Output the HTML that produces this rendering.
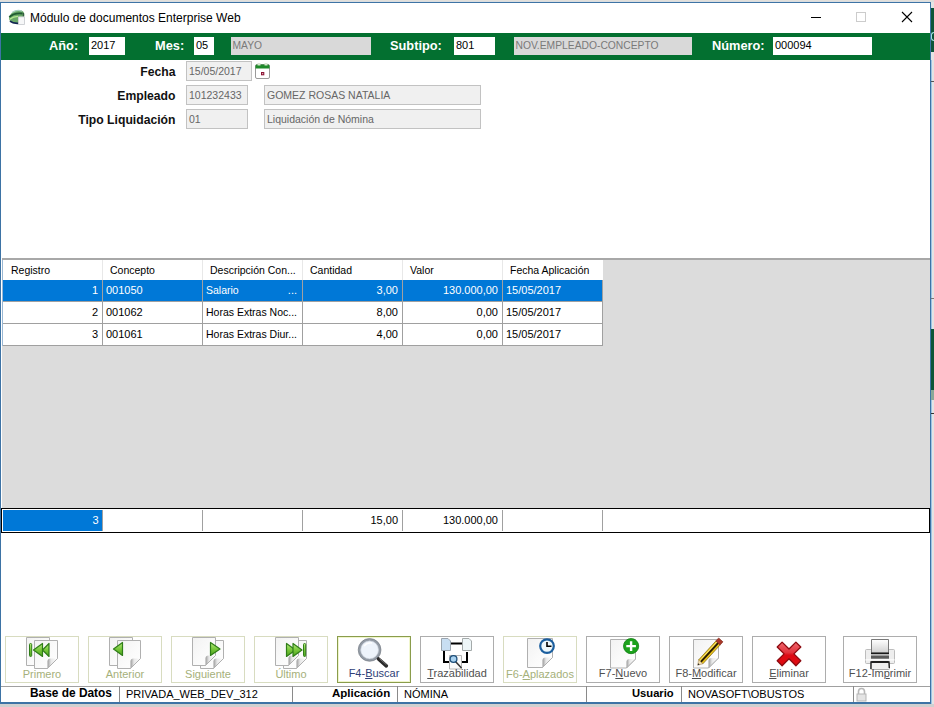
<!DOCTYPE html><html><head><meta charset="utf-8"><style>
*{margin:0;padding:0;box-sizing:border-box}
html,body{width:934px;height:707px;overflow:hidden;background:#cfcfcf;font-family:"Liberation Sans",sans-serif}
.a{position:absolute}
.t{position:absolute;white-space:nowrap;line-height:1}
.lbl{font-weight:bold;color:#fff;font-size:12.8px}
.wbox{position:absolute;background:#fff;height:18px;top:37px;font-size:11px;line-height:1;color:#000;padding:3px 0 0 2px;white-space:nowrap}
.gbox{position:absolute;background:#d9d9d9;height:18px;top:37px;font-size:10.3px;line-height:1;color:#7a7a7a;padding:4px 0 0 1.5px;white-space:nowrap}
.flbl{font-weight:bold;color:#111;font-size:12.2px;left:0;width:175.5px;text-align:right}
.rbox{position:absolute;background:#f0f0f0;border:1px solid #c2c2c2;height:20px;font-size:10.5px;line-height:1;color:#666;padding:3.8px 0 0 2px;white-space:nowrap}
.hc{position:absolute;height:20px;font-size:10.5px;line-height:1;padding-top:5px;white-space:nowrap;color:#000}
.rc{position:absolute;height:21px;font-size:11px;line-height:1;padding-top:5px;white-space:nowrap;text-align:right}
.btn{position:absolute;top:636px;width:74px;height:47px;border:1px solid #dcdcc4;background:#fff}
.btn svg{position:absolute;left:-1px;top:-1px}
.cap{position:absolute;left:-1px;width:74px;top:31px;text-align:center;font-size:11px;line-height:1;color:#b4be8e;white-space:nowrap}
.sl{position:absolute;top:686px;width:1px;height:16px;background:#8a8a8a}
</style></head><body>
<svg width="0" height="0" style="position:absolute"><defs><linearGradient id="pgf" x1="0" y1="0" x2="1" y2="1"><stop offset="0" stop-color="#f2f2f2"/><stop offset="0.6" stop-color="#fbfbfb"/><stop offset="1" stop-color="#ffffff"/></linearGradient><linearGradient id="gaf" x1="0" y1="0" x2="0" y2="1"><stop offset="0" stop-color="#b6ea7c"/><stop offset="0.5" stop-color="#78c83a"/><stop offset="1" stop-color="#4da21e"/></linearGradient><linearGradient id="ear" x1="0" y1="0" x2="1" y2="0"><stop offset="0" stop-color="#9a9a9a"/><stop offset="0.35" stop-color="#e8e8e8"/><stop offset="1" stop-color="#ffffff"/></linearGradient></defs></svg>
<div class="a" style="left:0;top:0;width:934px;height:1px;background:#e2dfda"></div>
<div class="a" style="left:0;top:1px;width:934px;height:1px;background:#d9dde0"></div>
<div class="a" style="left:0;top:2px;width:931px;height:702px;background:#fff;border:1px solid #3d73a5;border-bottom-width:2px"></div>
<div class="a" style="left:0;top:704px;width:934px;height:3px;background:#d0d0d0"></div>
<div class="a" style="left:931px;top:2px;width:3px;height:702px;background:#e4e4e4"></div>
<div class="a" style="left:931px;top:60px;width:1px;height:644px;background:#9cc4e4"></div>
<div class="a" style="left:931px;top:8px;width:3px;height:44px;background:#0d5538"></div>
<div class="a" style="left:931px;top:32px;width:3px;height:9px;border:1px solid #9fe0e0;border-right:none;border-radius:4px 0 0 4px"></div>
<div class="a" style="left:931px;top:81px;width:3px;height:1px;background:#555"></div>
<div class="a" style="left:931px;top:298px;width:3px;height:1px;background:#777"></div>
<div class="a" style="left:931px;top:329px;width:3px;height:61px;background:#0d5538"></div>
<div class="a" style="left:931px;top:390px;width:3px;height:10px;background:#8aa898"></div>
<div class="a" style="left:931px;top:413px;width:3px;height:1px;background:#333"></div>
<svg class="a" style="left:7px;top:7px" width="20" height="20" viewBox="0 0 20 20">
<path d="M2 11.5 C2.5 6.5 7.5 3 12.5 3.2 C15.5 3.4 17.5 5 17.5 8 L17 10 L11 10 L11 16.5 C7 17 2.5 15.5 2 11.5Z" fill="#6aa868"/>
<path d="M5 5.5 C8 3.5 12 3 15 4" stroke="#a8d0c0" stroke-width="1.4" fill="none"/>
<path d="M2.3 10 C5 7.5 10 5.8 15.5 6.5" stroke="#1f5a32" stroke-width="1.8" fill="none"/>
<path d="M2.6 12.2 C5 10.5 8 9.5 11 9.4" stroke="#b4e890" stroke-width="1.4" fill="none"/>
<path d="M3 14.2 C5 16 8 16.6 11.5 16.4" stroke="#122452" stroke-width="1.8" fill="none"/>
<path d="M16.3 6 V12" stroke="#2a4a3a" stroke-width="1" />
<path d="M11.5 9.8 H17.5 V17.5 H11.5Z" fill="#f6f7f8" stroke="#c4c8cc" stroke-width="0.8"/>
</svg>
<div class="t" style="left:30px;top:12px;font-size:12px;color:#000">Módulo de documentos Enterprise Web</div>
<div class="a" style="left:811px;top:17px;width:10px;height:1px;background:#000"></div>
<div class="a" style="left:856px;top:12px;width:10px;height:10px;border:1px solid #cccccc"></div>
<svg class="a" style="left:901px;top:11px" width="12" height="12"><path d="M1 1L11 11M11 1L1 11" stroke="#000" stroke-width="1.1"/></svg>
<div class="a" style="left:1px;top:33px;width:929px;height:27px;background:#037030"></div>
<div class="t lbl" style="left:49px;top:40px">Año:</div>
<div class="wbox" style="left:89px;width:36px">2017</div>
<div class="t lbl" style="left:155px;top:40px">Mes:</div>
<div class="wbox" style="left:194px;width:20px">05</div>
<div class="gbox" style="left:231px;width:140px">MAYO</div>
<div class="t lbl" style="left:390px;top:40px">Subtipo:</div>
<div class="wbox" style="left:454px;width:41px">801</div>
<div class="gbox" style="left:514px;width:178px">NOV.EMPLEADO-CONCEPTO</div>
<div class="t lbl" style="left:712px;top:40px">Número:</div>
<div class="wbox" style="left:773px;width:99px">000094</div>
<div class="t flbl" style="top:66px">Fecha</div>
<div class="rbox" style="left:186px;top:61px;width:66px">15/05/2017</div>
<svg class="a" style="left:255px;top:63px" width="15" height="16" viewBox="0 0 15 16">
<rect x="0.5" y="1.5" width="14" height="14" rx="1.5" fill="#fff" stroke="#9a9a9a"/>
<path d="M0.5 3 Q0.5 1.5 2 1.5 H13 Q14.5 1.5 14.5 3 V5.5 H0.5Z" fill="#1f8a2a"/>
<rect x="2.5" y="0" width="3" height="2.5" fill="#d8e8d0"/><rect x="9.5" y="0" width="3" height="2.5" fill="#d8e8d0"/>
<rect x="6" y="9" width="3.3" height="3.3" fill="#8e1535"/><rect x="7.2" y="10.2" width="1" height="1" fill="#fff"/>
</svg>
<div class="t flbl" style="top:90px">Empleado</div>
<div class="rbox" style="left:186px;top:85px;width:62px">101232433</div>
<div class="rbox" style="left:264px;top:85px;width:217px">GOMEZ ROSAS NATALIA</div>
<div class="t flbl" style="top:114px">Tipo Liquidación</div>
<div class="rbox" style="left:186px;top:109px;width:62px">01</div>
<div class="rbox" style="left:264px;top:109px;width:217px">Liquidación de Nómina</div>
<div class="a" style="left:2px;top:258px;width:928px;height:250px;background:#dcdcdc;border-top:2px solid #a8a8a8"></div>
<div class="a" style="left:2px;top:260px;width:601px;height:86px;background:#fff;border-left:1px solid #9ab8d4"></div>
<div class="hc" style="left:11px;top:260px;width:91px">Registro</div>
<div class="hc" style="left:110px;top:260px;width:92px">Concepto</div>
<div class="a" style="left:102px;top:260px;width:1px;height:20px;background:#e8e8e8"></div>
<div class="hc" style="left:210px;top:260px;width:92px">Descripción Con...</div>
<div class="a" style="left:202px;top:260px;width:1px;height:20px;background:#e8e8e8"></div>
<div class="hc" style="left:310px;top:260px;width:92px">Cantidad</div>
<div class="a" style="left:302px;top:260px;width:1px;height:20px;background:#e8e8e8"></div>
<div class="hc" style="left:410px;top:260px;width:92px">Valor</div>
<div class="a" style="left:402px;top:260px;width:1px;height:20px;background:#e8e8e8"></div>
<div class="hc" style="left:510px;top:260px;width:92px">Fecha Aplicación</div>
<div class="a" style="left:502px;top:260px;width:1px;height:20px;background:#e8e8e8"></div>
<div class="a" style="left:3px;top:280px;width:599px;height:21px;background:#0078d7"></div>
<div class="rc" style="left:3px;top:280px;width:95px;color:#fff">1</div>
<div class="rc" style="left:106px;top:280px;width:96px;text-align:left;color:#fff">001050</div>
<div class="rc" style="left:206px;top:280px;width:96px;text-align:left;color:#fff;font-size:10.5px">Salario</div>
<div class="rc" style="left:302px;top:280px;width:96px;color:#fff">3,00</div>
<div class="rc" style="left:402px;top:280px;width:96px;color:#fff">130.000,00</div>
<div class="rc" style="left:506px;top:280px;width:96px;text-align:left;color:#fff">15/05/2017</div>
<div class="rc" style="left:202px;top:280px;width:95px;color:#fff">...</div>
<div class="a" style="left:3px;top:301px;width:600px;height:1px;background:#a0a0a0"></div>
<div class="rc" style="left:3px;top:302px;width:95px;color:#000">2</div>
<div class="rc" style="left:106px;top:302px;width:96px;text-align:left;color:#000">001062</div>
<div class="rc" style="left:206px;top:302px;width:96px;text-align:left;color:#000;font-size:10.5px">Horas Extras Noc...</div>
<div class="rc" style="left:302px;top:302px;width:96px;color:#000">8,00</div>
<div class="rc" style="left:402px;top:302px;width:96px;color:#000">0,00</div>
<div class="rc" style="left:506px;top:302px;width:96px;text-align:left;color:#000">15/05/2017</div>
<div class="a" style="left:3px;top:323px;width:600px;height:1px;background:#a0a0a0"></div>
<div class="rc" style="left:3px;top:324px;width:95px;color:#000">3</div>
<div class="rc" style="left:106px;top:324px;width:96px;text-align:left;color:#000">001061</div>
<div class="rc" style="left:206px;top:324px;width:96px;text-align:left;color:#000;font-size:10.5px">Horas Extras Diur...</div>
<div class="rc" style="left:302px;top:324px;width:96px;color:#000">4,00</div>
<div class="rc" style="left:402px;top:324px;width:96px;color:#000">0,00</div>
<div class="rc" style="left:506px;top:324px;width:96px;text-align:left;color:#000">15/05/2017</div>
<div class="a" style="left:3px;top:345px;width:600px;height:1px;background:#a0a0a0"></div>
<div class="a" style="left:102px;top:280px;width:1px;height:66px;background:#a0a0a0"></div>
<div class="a" style="left:202px;top:280px;width:1px;height:66px;background:#a0a0a0"></div>
<div class="a" style="left:302px;top:280px;width:1px;height:66px;background:#a0a0a0"></div>
<div class="a" style="left:402px;top:280px;width:1px;height:66px;background:#a0a0a0"></div>
<div class="a" style="left:502px;top:280px;width:1px;height:66px;background:#a0a0a0"></div>
<div class="a" style="left:602px;top:280px;width:1px;height:66px;background:#a0a0a0"></div>
<div class="a" style="left:1px;top:508px;width:929px;height:25px;border:1px solid #000;background:#fff"></div>
<div class="a" style="left:3px;top:510px;width:99px;height:21px;background:#0078d7"></div>
<div class="rc" style="left:3px;top:510px;width:95.5px;color:#fff">3</div>
<div class="a" style="left:102px;top:510px;width:1px;height:21px;background:#a0a0a0"></div>
<div class="a" style="left:202px;top:510px;width:1px;height:21px;background:#a0a0a0"></div>
<div class="a" style="left:302px;top:510px;width:1px;height:21px;background:#a0a0a0"></div>
<div class="a" style="left:402px;top:510px;width:1px;height:21px;background:#a0a0a0"></div>
<div class="a" style="left:502px;top:510px;width:1px;height:21px;background:#a0a0a0"></div>
<div class="a" style="left:602px;top:510px;width:1px;height:21px;background:#a0a0a0"></div>
<div class="rc" style="left:302px;top:510px;width:96px;color:#000">15,00</div>
<div class="rc" style="left:402px;top:510px;width:96px;color:#000">130.000,00</div>
<div class="btn" style="left:5px;border-color:#d8dcc0"><svg width="74" height="47" viewBox="0 0 74 47"><path d="M21.5 1.5 H44.5 V29.5 H21.5 Z" fill="url(#pgf)" stroke="#b0b0b0"/><path d="M29.5 4.5 H52.5 V22.5 L42.5 32.5 H29.5 Z" fill="url(#pgf)" stroke="#b0b0b0"/><path d="M42.5 32.5 L42.5 25.5 Q42.5 22.5 45.5 22.5 L52.5 22.5Z" fill="url(#ear)"/><path d="M52.5 22.5 L42.5 32.5" stroke="#b0b0b0" stroke-width="1"/><rect x="24.5" y="7.5" width="2.2" height="13" rx="1" fill="url(#gaf)" stroke="#2f7d18"/><path d="M28.5 14 L37.5 7.5 V20.5 Z" fill="url(#gaf)" stroke="#2f7d18" stroke-width="1.2" stroke-linejoin="round"/><path d="M37.5 14 L44 7.5 V20.5 Z" fill="url(#gaf)" stroke="#2f7d18" stroke-width="1.2" stroke-linejoin="round"/></svg><div class="cap" style="color:#a5b07a;top:32px">Primero</div></div>
<div class="btn" style="left:88px;border-color:#d8dcc0"><svg width="74" height="47" viewBox="0 0 74 47"><path d="M21.5 1.5 H44.5 V29.5 H21.5 Z" fill="url(#pgf)" stroke="#b0b0b0"/><path d="M29.5 4.5 H52.5 V22.5 L42.5 32.5 H29.5 Z" fill="url(#pgf)" stroke="#b0b0b0"/><path d="M42.5 32.5 L42.5 25.5 Q42.5 22.5 45.5 22.5 L52.5 22.5Z" fill="url(#ear)"/><path d="M52.5 22.5 L42.5 32.5" stroke="#b0b0b0" stroke-width="1"/><path d="M25.5 13 L34.5 6.5 V19.5 Z" fill="url(#gaf)" stroke="#2f7d18" stroke-width="1.2" stroke-linejoin="round"/></svg><div class="cap" style="color:#a5b07a;top:32px">Anterior</div></div>
<div class="btn" style="left:171px;border-color:#d8dcc0"><svg width="74" height="47" viewBox="0 0 74 47"><path d="M29.5 4.5 H52.5 V22.5 L42.5 32.5 H29.5 Z" fill="url(#pgf)" stroke="#b0b0b0"/><path d="M42.5 32.5 L42.5 25.5 Q42.5 22.5 45.5 22.5 L52.5 22.5Z" fill="url(#ear)"/><path d="M52.5 22.5 L42.5 32.5" stroke="#b0b0b0" stroke-width="1"/><path d="M21.5 1.5 H44.5 V19.5 L34.5 29.5 H21.5 Z" fill="url(#pgf)" stroke="#b0b0b0"/><path d="M34.5 29.5 L34.5 22.5 Q34.5 19.5 37.5 19.5 L44.5 19.5Z" fill="url(#ear)"/><path d="M44.5 19.5 L34.5 29.5" stroke="#b0b0b0" stroke-width="1"/><path d="M49 13 L39.5 6.5 V19.5 Z" fill="url(#gaf)" stroke="#2f7d18" stroke-width="1.2" stroke-linejoin="round"/></svg><div class="cap" style="color:#a5b07a;top:32px">Siguiente</div></div>
<div class="btn" style="left:254px;border-color:#d8dcc0"><svg width="74" height="47" viewBox="0 0 74 47"><path d="M29.5 4.5 H52.5 V22.5 L42.5 32.5 H29.5 Z" fill="url(#pgf)" stroke="#b0b0b0"/><path d="M42.5 32.5 L42.5 25.5 Q42.5 22.5 45.5 22.5 L52.5 22.5Z" fill="url(#ear)"/><path d="M52.5 22.5 L42.5 32.5" stroke="#b0b0b0" stroke-width="1"/><path d="M21.5 1.5 H44.5 V19.5 L34.5 29.5 H21.5 Z" fill="url(#pgf)" stroke="#b0b0b0"/><path d="M34.5 29.5 L34.5 22.5 Q34.5 19.5 37.5 19.5 L44.5 19.5Z" fill="url(#ear)"/><path d="M44.5 19.5 L34.5 29.5" stroke="#b0b0b0" stroke-width="1"/><path d="M41.5 14 L32.5 7.5 V20.5 Z" fill="url(#gaf)" stroke="#2f7d18" stroke-width="1.2" stroke-linejoin="round"/><path d="M48 14 L39 7.5 V20.5 Z" fill="url(#gaf)" stroke="#2f7d18" stroke-width="1.2" stroke-linejoin="round"/><rect x="49.5" y="7.5" width="2.2" height="13" rx="1" fill="url(#gaf)" stroke="#2f7d18"/></svg><div class="cap" style="color:#a5b07a;top:32px">Último</div></div>
<div class="btn" style="left:337px;border-color:#8a9c4c;box-shadow:inset 0 0 0 1px #f0f6cc"><svg width="74" height="47" viewBox="0 0 74 47"><circle cx="32.6" cy="13.9" r="10.2" fill="#eef4fb" stroke="#949ca6" stroke-width="2.3"/><circle cx="32.6" cy="13.9" r="11.4" fill="none" stroke="#6e767e" stroke-width="0.6"/><circle cx="32.6" cy="13.9" r="8.9" fill="none" stroke="#c2cad4" stroke-width="0.6"/><path d="M27 10 Q30 6.5 35 7" stroke="#fff" stroke-width="1.3" fill="none"/><path d="M41.5 23 L49.3 29.8" stroke="#2a2a2a" stroke-width="3.6" stroke-linecap="round"/><path d="M42.5 22.7 L49.5 28.8" stroke="#7a7a7a" stroke-width="0.9"/></svg><div class="cap" style="color:#2f3f78;top:31px">F4-<u>B</u>uscar</div></div>
<div class="btn" style="left:420px;border-color:#adadad"><svg width="74" height="47" viewBox="0 0 74 47"><path d="M30.5 7.5 H42" stroke="#000" stroke-width="2"/><path d="M24 14 V26 H30 M41 26 H47 V16" stroke="#000" stroke-width="2" fill="none"/><path d="M21.5 2.5 H28 L30.5 5 V14.5 H21.5Z" fill="#c8def2" stroke="#9aa4ae"/><path d="M42.5 2.5 H49 L51.5 5 V14.5 H42.5Z" fill="#eef6f8" stroke="#a4aaaa"/><path d="M29.5 19.5 H41.5 V33 H29.5Z" fill="#fafafa" stroke="#b5b5b5"/><path d="M35 25 L41.5 32" stroke="#333" stroke-width="1.5"/><circle cx="33.5" cy="23" r="3.4" fill="#a9d2f0" stroke="#1e4f7a" stroke-width="1.3"/></svg><div class="cap" style="color:#505050;top:31px"><u>T</u>razabilidad</div></div>
<div class="btn" style="left:503px;border-color:#d8dcc0"><svg width="74" height="47" viewBox="0 0 74 47"><path d="M24.5 2.5 H49.5 V21.5 L39.5 31.5 H24.5 Z" fill="url(#pgf)" stroke="#b0b0b0"/><path d="M39.5 31.5 L39.5 24.5 Q39.5 21.5 42.5 21.5 L49.5 21.5Z" fill="url(#ear)"/><path d="M49.5 21.5 L39.5 31.5" stroke="#b0b0b0" stroke-width="1"/><circle cx="44" cy="10.1" r="6.8" fill="#eef8fc" stroke="#1b5e9e" stroke-width="2.2"/><path d="M44 6 V10.3 H48.5" stroke="#000" stroke-width="1.6" fill="none"/></svg><div class="cap" style="color:#a5b07a;top:32px">F6-<u>A</u>plazados</div></div>
<div class="btn" style="left:586px;border-color:#adadad"><svg width="74" height="47" viewBox="0 0 74 47"><path d="M24.5 3.5 H49.5 V23 L40.5 32 H24.5 Z" fill="url(#pgf)" stroke="#b0b0b0"/><path d="M40.5 32 L40.5 26 Q40.5 23 43.5 23 L49.5 23Z" fill="url(#ear)"/><path d="M49.5 23 L40.5 32" stroke="#b0b0b0" stroke-width="1"/><circle cx="45.1" cy="10.1" r="7.6" fill="#1ca21c" stroke="#0f7d10" stroke-width="0.8"/><path d="M40.3 10.1 H49.9 M45.1 5.3 V14.9" stroke="#fff" stroke-width="2.4"/></svg><div class="cap" style="color:#505050;top:31px">F7-<u>N</u>uevo</div></div>
<div class="btn" style="left:669px;border-color:#adadad"><svg width="74" height="47" viewBox="0 0 74 47"><path d="M24.5 3.5 H49.5 V22 L39.5 32 H24.5 Z" fill="url(#pgf)" stroke="#b0b0b0"/><path d="M39.5 32 L39.5 25 Q39.5 22 42.5 22 L49.5 22Z" fill="url(#ear)"/><path d="M49.5 22 L39.5 32" stroke="#b0b0b0" stroke-width="1"/><path d="M29.59 23.92 L46.83 5.05 L51.11 8.96 L33.88 27.83Z" fill="#e9c21c" stroke="#6a5000" stroke-width="0.6"/><path d="M30.33 24.60 L47.56 5.72 L48.45 6.53 L31.22 25.40Z" fill="#fbe870"/><path d="M31.07 25.27 L48.30 6.39 L49.78 7.74 L32.55 26.62Z" fill="#2a1c00"/><path d="M28.70 29.20 L29.59 23.92 L33.88 27.83Z" fill="#f2deb0" stroke="#a08050" stroke-width="0.5"/><path d="M28.70 29.20 L29.10 27.13 L30.73 28.61Z" fill="#222"/><path d="M46.83 5.05 L49.66 1.94 L53.94 5.86 L51.11 8.96Z" fill="#a8382a" stroke="#7a2010" stroke-width="0.6"/></svg><div class="cap" style="color:#505050;top:31px">F8-<u>M</u>odificar</div></div>
<div class="btn" style="left:752px;border-color:#adadad"><svg width="74" height="47" viewBox="0 0 74 47"><defs><linearGradient id="rg" x1="0" y1="0" x2="0" y2="1"><stop offset="0" stop-color="#f06a70"/><stop offset="0.45" stop-color="#e2303a"/><stop offset="0.55" stop-color="#dd0a14"/><stop offset="1" stop-color="#e00a10"/></linearGradient></defs><path d="M25.2 10.999999999999998 L30.1 6.099999999999998 L37 12.999999999999998 L43.9 6.099999999999998 L48.8 10.999999999999998 L41.9 17.9 L48.8 24.799999999999997 L43.9 29.7 L37 22.799999999999997 L30.1 29.7 L25.2 24.799999999999997 L32.1 17.9 Z" fill="url(#rg)" stroke="#8c0a10" stroke-width="1.3" stroke-linejoin="round"/></svg><div class="cap" style="color:#505050;top:31px"><u>E</u>liminar</div></div>
<div class="btn" style="left:843px;border-color:#adadad"><svg width="74" height="47" viewBox="0 0 74 47"><defs><linearGradient id="pg" x1="0" y1="0" x2="0" y2="1"><stop offset="0" stop-color="#fff"/><stop offset="1" stop-color="#cfcfcf"/></linearGradient></defs><rect x="22.5" y="13.5" width="29" height="14" rx="1" fill="#e0e0e0" stroke="#bdbdbd"/><rect x="23" y="14" width="5" height="13" fill="#eeeeee"/><rect x="46" y="14" width="5" height="13" fill="#eeeeee"/><path d="M28.5 3.5 H45.5 V17 H28.5Z" fill="url(#pg)" stroke="#6a6a6a" stroke-width="0.9"/><rect x="28" y="16.6" width="18" height="1.6" fill="#1a1a1a"/><rect x="28" y="19.5" width="18" height="3.2" fill="#5a5a5a"/><rect x="22.5" y="23" width="29" height="1.6" fill="#fafafa"/><path d="M28 26 H46 L46.5 32.5 Q46.5 33.5 45.5 33.5 H28.5 Q27.5 33.5 27.5 32.5Z" fill="#f0f0f0" stroke="#9a9a9a" stroke-width="0.8"/><path d="M28 33 L28 26 H46 L46.3 32" stroke="#1a1a1a" stroke-width="1.3" fill="none"/><rect x="28.5" y="25.3" width="17" height="1.4" fill="#111"/></svg><div class="cap" style="color:#505050;top:31px">F12-Im<u>p</u>rimir</div></div>
<div class="a" style="left:1px;top:686px;width:929px;height:1px;background:#a0a0a0"></div>
<div class="t" style="left:30px;top:688px;font-size:11.9px;font-weight:bold">Base de Datos</div>
<div class="sl" style="left:119px"></div>
<div class="t" style="left:126px;top:689px;font-size:11px">PRIVADA_WEB_DEV_312</div>
<div class="sl" style="left:292px"></div>
<div class="t" style="left:332px;top:688px;font-size:11.5px;font-weight:bold">Aplicación</div>
<div class="sl" style="left:397px"></div>
<div class="t" style="left:404px;top:689px;font-size:11px">NÓMINA</div>
<div class="sl" style="left:586px"></div>
<div class="t" style="left:632px;top:688px;font-size:11.2px;font-weight:bold">Usuario</div>
<div class="sl" style="left:681px"></div>
<div class="t" style="left:688px;top:689px;font-size:11px">NOVASOFT\OBUSTOS</div>
<div class="sl" style="left:853px"></div>
<svg class="a" style="left:856px;top:687px" width="11" height="15" viewBox="0 0 11 15">
<path d="M2.5 7 V4.5 A3 3 0 0 1 8.5 4.5 V7" stroke="#b8b8b8" stroke-width="1.6" fill="none"/>
<rect x="1" y="7" width="9" height="7" fill="#e4e4e4" stroke="#b5b5b5"/>
</svg>
</body></html>
